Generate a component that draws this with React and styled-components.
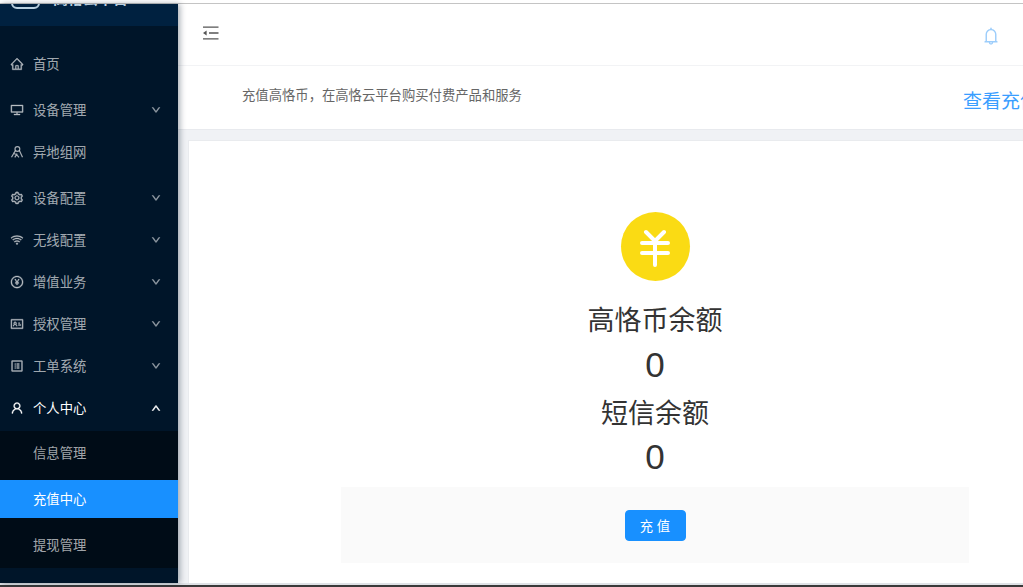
import React from "react";
import styled, { createGlobalStyle } from "styled-components";
import {
  AiOutlineHome,
  AiOutlineDesktop,
  AiOutlineSetting,
  AiOutlineWifi,
  AiOutlinePayCircle,
  AiOutlineIdcard,
  AiOutlineProfile,
  AiOutlineUser,
  AiOutlineBell,
  AiOutlineDown,
  AiOutlineUp,
} from "react-icons/ai";

const GlobalStyle = createGlobalStyle`
  html, body {
    margin: 0;
    padding: 0;
    background: #fff;
    overflow: hidden;
  }
  * {
    box-sizing: border-box;
  }
  body {
    font-family: "Liberation Sans", "Noto Sans CJK SC", sans-serif;
  }
`;

const RemoteIcon = () => (
  <svg width="14" height="14" viewBox="0 0 14 14" fill="none" stroke="currentColor">
    <circle cx="7.4" cy="4" r="2.4" strokeWidth="1.2" />
    <path d="M5.4 5.6 1.5 12.2M9.4 5.6l3.1 6.6M3 8.2l3.4 1.2 2.6 3M7.2 8.6l-2.4 3.8" strokeWidth="1.2" />
  </svg>
);

const FoldIcon = () => (
  <svg width="17" height="14" viewBox="0 0 17 14" fill="none">
    <path d="M1 1.2h15.5M7 7h9.5M1 12.8h15.5" stroke="#555" strokeWidth="1.3" />
    <path d="M4.6 4.4 1 7l3.6 2.6z" fill="#555" />
  </svg>
);

const YenIcon = () => (
  <svg width="32" height="40" viewBox="0 0 32 40" fill="none" stroke="#fff" strokeWidth="4" strokeLinecap="round" strokeLinejoin="round">
    <path d="M7 5 16 14 25 5M3 16h26M3 26h26M16 15v23" />
  </svg>
);

const menu = [
  { label: "首页", icon: <AiOutlineHome /> },
  { label: "设备管理", icon: <AiOutlineDesktop />, arrow: true, gap: 4 },
  { label: "异地组网", icon: <RemoteIcon /> },
  { label: "设备配置", icon: <AiOutlineSetting />, arrow: true, gap: 4 },
  { label: "无线配置", icon: <AiOutlineWifi />, arrow: true },
  { label: "增值业务", icon: <AiOutlinePayCircle />, arrow: true },
  { label: "授权管理", icon: <AiOutlineIdcard />, arrow: true },
  { label: "工单系统", icon: <AiOutlineProfile />, arrow: true },
];

const App = () => {
  return (
    <Page>
      <GlobalStyle />
      <TopEdge />
      <Body>
        <Sidebar>
          <LogoBar>
            <LogoInner>
              <LogoMark />
              <LogoText>高恪云平台</LogoText>
            </LogoInner>
          </LogoBar>
          <Menu>
            {menu.map((item) => (
              <MenuItem key={item.label} $gap={item.gap}>
                <MenuIcon>{item.icon}</MenuIcon>
                <MenuLabel>{item.label}</MenuLabel>
                {item.arrow && (
                  <Arrow>
                    <AiOutlineDown />
                  </Arrow>
                )}
              </MenuItem>
            ))}
            <MenuItem $open>
              <MenuIcon>
                <AiOutlineUser />
              </MenuIcon>
              <MenuLabel>个人中心</MenuLabel>
              <Arrow $open>
                <AiOutlineUp />
              </Arrow>
            </MenuItem>
            <SubMenu>
              <SubItem>信息管理</SubItem>
              <SubItem $active>充值中心</SubItem>
              <SubItem>提现管理</SubItem>
            </SubMenu>
          </Menu>
        </Sidebar>
        <Main>
          <Header>
            <FoldButton>
              <FoldIcon />
            </FoldButton>
            <Bell>
              <AiOutlineBell />
            </Bell>
          </Header>
          <PageHead>
            <PageTitle>高恪币充值</PageTitle>
            <PageRow>
              <PageDesc>充值高恪币，在高恪云平台购买付费产品和服务</PageDesc>
              <RecordLink>查看充值记录</RecordLink>
            </PageRow>
          </PageHead>
          <Content>
            <Card>
              <Coin>
                <YenIcon />
              </Coin>
              <BalanceTitle>高恪币余额</BalanceTitle>
              <BalanceValue>0</BalanceValue>
              <BalanceTitle $second>短信余额</BalanceTitle>
              <BalanceValue $second>0</BalanceValue>
              <ActionBand>
                <RechargeButton>充 值</RechargeButton>
              </ActionBand>
            </Card>
          </Content>
        </Main>
      </Body>
      <BottomEdge />
    </Page>
  );
};

export default App;

const Page = styled.div`
  display: flex;
  flex-direction: column;
  width: 1023px;
  height: 587px;
  overflow: hidden;
  background: #fff;
`;

const TopEdge = styled.div`
  flex: none;
  height: 4px;
  background: #fff;
  border-bottom: 1px solid #c4c4c4;
`;

const BottomEdge = styled.div`
  flex: none;
  height: 4px;
  background: #dfe2e6;
  border-bottom: 2px solid #3a3a3a;
`;

const Body = styled.div`
  display: flex;
  flex: 1;
  min-height: 0;
  background: #f0f2f5;
`;

const Sidebar = styled.aside`
  position: relative;
  z-index: 2;
  display: flex;
  flex-direction: column;
  flex: none;
  width: 178px;
  background: #001529;
  box-shadow: 2px 0 6px rgba(0, 21, 41, 0.35);
`;

const LogoBar = styled.div`
  flex: none;
  height: 22px;
  overflow: hidden;
  background: #002140;
`;

const LogoInner = styled.div`
  display: flex;
  align-items: flex-end;
  height: 22px;
  margin-top: -17px;
  padding-left: 11px;
  gap: 13px;
`;

const LogoMark = styled.div`
  flex: none;
  width: 29px;
  height: 22px;
  border: 2px solid #b9d0e0;
  border-radius: 6px;
`;

const LogoText = styled.div`
  margin-bottom: -1px;
  color: #b9d0e0;
  font-size: 15px;
  line-height: 22px;
  font-weight: 700;
`;

const Menu = styled.nav`
  display: flex;
  flex-direction: column;
  padding-top: 17px;
`;

const MenuItem = styled.div`
  display: flex;
  align-items: center;
  flex: none;
  height: 42px;
  margin-top: ${(p) => p.$gap || 0}px;
  padding-left: 10px;
  color: ${(p) => (p.$open ? "#fff" : "rgba(255, 255, 255, 0.65)")};
`;

const MenuIcon = styled.span`
  display: flex;
  align-items: center;
  justify-content: center;
  width: 14px;
  height: 14px;
  margin-right: 9px;
  font-size: 16px;

  svg {
    stroke-width: 24;
  }
`;

const MenuLabel = styled.span`
  padding-bottom: 2px;
  font-size: 13.33px;
`;

const Arrow = styled.span`
  display: flex;
  margin-left: auto;
  margin-right: 17px;
  font-size: 10px;
  opacity: ${(p) => (p.$open ? 1 : 0.75)};

  svg {
    stroke-width: 80;
  }
`;

const SubMenu = styled.div`
  display: flex;
  flex-direction: column;
  gap: 8px;
  margin-top: 2px;
  padding: 3px 0 4px;
  background: #000c17;
`;

const SubItem = styled.div`
  display: flex;
  align-items: center;
  height: 38px;
  padding: 0 0 2px 33px;
  font-size: 13.33px;
  color: ${(p) => (p.$active ? "#fff" : "rgba(255, 255, 255, 0.65)")};
  background: ${(p) => (p.$active ? "#1890ff" : "transparent")};
`;

const Main = styled.main`
  display: flex;
  flex-direction: column;
  flex: none;
  width: 945px;
`;

const Header = styled.header`
  position: relative;
  z-index: 1;
  display: flex;
  align-items: center;
  justify-content: space-between;
  flex: none;
  height: 62px;
  padding: 0 122px 0 24px;
  background: #fff;
  border-bottom: 1px solid #f2f3f5;
`;

const FoldButton = styled.div`
  display: flex;
  margin-top: -3px;
`;

const Bell = styled.div`
  display: flex;
  margin-top: 3px;
  font-size: 20px;
  color: #9ccdfb;
`;

const PageHead = styled.div`
  flex: none;
  height: 64px;
  overflow: hidden;
  background: #fff;
  border-bottom: 1px solid #e8eaee;
  padding-left: 64px;
`;

const PageTitle = styled.div`
  height: 12px;
  margin-top: -14px;
  font-size: 16px;
  line-height: 12px;
  color: #333;
`;

const PageRow = styled.div`
  display: flex;
  align-items: flex-start;
  justify-content: space-between;
  margin-top: 14px;
`;

const PageDesc = styled.div`
  margin-top: 9px;
  font-size: 13.33px;
  line-height: 18px;
  color: #666;
`;

const RecordLink = styled.div`
  flex: none;
  width: 160px;
  margin-top: 11px;
  white-space: nowrap;
  font-size: 19px;
  line-height: 26px;
  color: #3a9eff;
`;

const Content = styled.div`
  flex: 1;
  min-height: 0;
  padding: 10px 0 0 10px;
`;

const Card = styled.section`
  display: flex;
  flex-direction: column;
  align-items: center;
  width: 934px;
  height: 100%;
  padding-top: 71px;
  background: #fff;
  border: 1px solid #e9ebee;
  border-bottom: none;
`;

const Coin = styled.div`
  display: flex;
  align-items: center;
  justify-content: center;
  flex: none;
  width: 69px;
  height: 69px;
  border-radius: 50%;
  background: #fadb14;
`;

const BalanceTitle = styled.div`
  margin-top: ${(p) => (p.$second ? 0 : 20)}px;
  font-size: 27px;
  line-height: ${(p) => (p.$second ? 50 : 40)}px;
  color: #333;
`;

const BalanceValue = styled.div`
  font-size: 35px;
  line-height: ${(p) => (p.$second ? 36 : 48)}px;
  color: #333;
`;

const ActionBand = styled.div`
  display: flex;
  align-items: center;
  justify-content: center;
  flex: none;
  width: 628px;
  height: 76px;
  margin-top: 12px;
  background: #fafafa;
`;

const RechargeButton = styled.button`
  width: 61px;
  height: 31px;
  padding: 0;
  font-family: inherit;
  font-size: 13.33px;
  color: #fff;
  background: #1890ff;
  border: 1px solid #1890ff;
  border-radius: 4px;
  cursor: pointer;
`;
